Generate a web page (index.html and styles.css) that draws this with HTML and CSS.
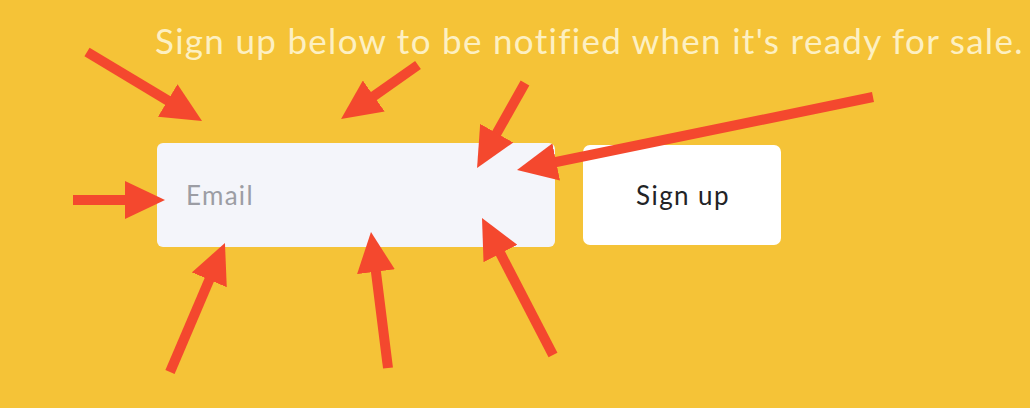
FILE: index.html
```html
<!DOCTYPE html>
<html lang="en">
<head>
<meta charset="utf-8">
<title>Sign up</title>
<link rel="stylesheet" href="styles.css">
</head>
<body>
<main class="page">
  <h1 class="headline">Sign up below to be notified when it's ready for sale.</h1>
  <form class="signup" onsubmit="return false">
    <input class="email" type="email" placeholder="Email">
    <button class="submit" type="submit">Sign up</button>
  </form>
</main>
<svg class="arrows" width="1030" height="408" viewBox="0 0 1030 408" aria-hidden="true">
  <defs>
    <marker id="head" markerUnits="userSpaceOnUse" markerWidth="40" markerHeight="38" refX="10" refY="19" orient="auto">
      <path d="M0,0 L40,19 L0,38 Z" class="arrow-head"/>
    </marker>
  </defs>
  <g class="arrow-shafts">
    <line x1="87" y1="52" x2="176.3" y2="105.6" marker-end="url(#head)"/>
    <line x1="418" y1="65" x2="365.6" y2="101.8" marker-end="url(#head)"/>
    <line x1="525" y1="83" x2="491.8" y2="141.9" marker-end="url(#head)"/>
    <line x1="873" y1="97" x2="546.4" y2="164" marker-end="url(#head)"/>
    <line x1="73" y1="200" x2="135" y2="200" marker-end="url(#head)"/>
    <line x1="170" y1="372" x2="213.2" y2="270.6" marker-end="url(#head)"/>
    <line x1="388" y1="368" x2="374.7" y2="261.8" marker-end="url(#head)"/>
    <line x1="553" y1="355" x2="495.8" y2="244.6" marker-end="url(#head)"/>
  </g>
</svg>
</body>
</html>
```
FILE: styles.css
```css
html, body {
  margin: 0;
  padding: 0;
}
body {
  position: relative;
  width: 1030px;
  height: 408px;
  overflow: hidden;
  background: #f5c337;
  font-family: Lato, "Open Sans", sans-serif;
}
.page {
  padding: 20px 0 0 155px;
}
.headline {
  margin: 0;
  font-size: 35px;
  line-height: 40px;
  font-weight: 400;
  color: #fdf0c2;
  letter-spacing: 1.3px;
  white-space: nowrap;
}
.signup {
  margin: 83px 0 0 2px;
  display: flex;
  align-items: center;
  gap: 28px;
}
.email {
  box-sizing: border-box;
  width: 398px;
  height: 104px;
  border: none;
  border-radius: 6px;
  background: #f4f5fa;
  padding: 0 29px;
  font-family: inherit;
  font-size: 26px;
  letter-spacing: 1.3px;
  color: #333;
  outline: none;
}
.email::placeholder {
  color: #9c9da4;
}
.submit {
  box-sizing: border-box;
  width: 198px;
  height: 100px;
  border: none;
  border-radius: 7px;
  background: #ffffff;
  font-family: inherit;
  font-size: 26px;
  letter-spacing: 1.4px;
  color: #222326;
  padding: 0 0 0 2px;
}
.arrows {
  position: absolute;
  left: 0;
  top: 0;
  pointer-events: none;
}
.arrow-shafts line {
  stroke: #f4482e;
  stroke-width: 10;
}
.arrow-head {
  fill: #f4482e;
}
```
